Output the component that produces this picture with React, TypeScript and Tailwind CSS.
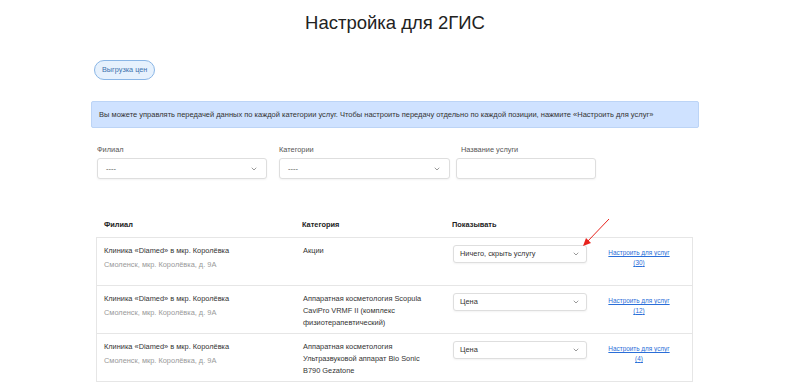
import { ChevronDown } from 'lucide-react';

const rows = [
    { cat: 'Акции', show: 'Ничего, скрыть услугу', count: 30 },
    { cat: 'Аппаратная косметология Scopula CaviPro VRMF II (комплекс физиотерапевтический)', show: 'Цена', count: 12 },
    { cat: 'Аппаратная косметология Ультразвуковой аппарат Bio Sonic B790 Gezatone', show: 'Цена', count: 4 },
];

function Select({ value, className }: { value: string; className: string }) {
    return (
        <div className={`flex items-center justify-between rounded-[3px] border border-[#dedede] bg-white shadow-[0_1px_2px_rgba(0,0,0,0.05)] ${className}`}>
            <span>{value}</span>
            <ChevronDown className="h-[8px] w-[8px] text-[#666]" strokeWidth={2} />
        </div>
    );
}

export default function App() {
    return (
        <div className="relative min-h-[383px] bg-white text-[#333]" style={{ fontFamily: '"Liberation Sans", Arial, sans-serif' }}>
            <div className="ml-[91px] w-[608px] pt-[11px]">
                <h1 className="text-center text-[18.5px] leading-[24px] text-[#222]">Настройка для 2ГИС</h1>

                <button className="ml-[3px] mt-[25px] h-[20px] rounded-full border border-[#8ab6e6] bg-[#e6f1fd] px-[7px] text-[7.3px] text-[#3d72ad]">
                    Выгрузка цен
                </button>

                <div className="mt-[21px] flex h-[27px] items-center rounded-[2px] border border-[#bcd4f6] bg-[#cfe2ff] px-[7px] text-[7.5px] text-[#333]">
                    Вы можете управлять передачей данных по каждой категории услуг. Чтобы настроить передачу отдельно по каждой позиции, нажмите «Настроить для услуг»
                </div>

                <div className="mt-[15px] flex pl-[6px] text-[7.4px] text-[#555]">
                    <div className="w-[182px]">
                        <div className="h-[14px] pt-[1px]">Филиал</div>
                        <Select value="----" className="mt-[1px] h-[21px] w-[170px] px-[8px] text-[#555]" />
                    </div>
                    <div className="w-[177px]">
                        <div className="h-[14px] pt-[1px]">Категории</div>
                        <Select value="----" className="mt-[1px] h-[21px] w-[171px] px-[8px] text-[#555]" />
                    </div>
                    <div className="w-[140px]">
                        <div className="h-[14px] pl-[5px] pt-[1px]">Название услуги</div>
                        <div className="mt-[1px] h-[21px] w-[140px] rounded-[3px] border border-[#dedede] bg-white shadow-[0_1px_2px_rgba(0,0,0,0.05)]" />
                    </div>
                </div>

                <div className="ml-[5px] mt-[39px] w-[597px] text-[7.4px]">
                    <div className="grid h-[20px] grid-cols-[199px_149px_155px_94px] border-b border-[#e6e6e6] font-bold text-[#222]">
                        <div className="pl-[8px] pt-[1px]">Филиал</div>
                        <div className="pl-[7px] pt-[1px]">Категория</div>
                        <div className="pl-[8px] pt-[1px]">Показывать</div>
                        <div />
                    </div>
                    {rows.map((r, i) => (
                        <div key={i} className="grid h-[48px] grid-cols-[199px_149px_155px_94px] border-x border-b border-[#e6e6e6] leading-[12px]">
                            <div className="pl-[7px] pt-[7px]">
                                <div className="text-[#333]">Клиника «Diamed» в мкр. Королёвка</div>
                                <div className="mt-[2px] text-[#999]">Смоленск, мкр. Королёвка, д. 9А</div>
                            </div>
                            <div className="pl-[7px] pr-[10px] pt-[7px] text-[#333]">{r.cat}</div>
                            <div className="pl-[8px] pt-[7px]">
                                <Select value={r.show} className="h-[18px] w-[134px] pl-[6px] pr-[6px] text-[#333]" />
                            </div>
                            <div className="pr-[16px] pt-[10px] text-center text-[6.4px] leading-[10px]">
                                <a href="#" className="text-[#2a6ed8] underline">Настроить для услуг<br />({r.count})</a>
                            </div>
                        </div>
                    ))}
                </div>
            </div>

            <svg className="absolute left-[578px] top-[216px]" width="36" height="34" viewBox="0 0 36 34">
                <line x1="31" y1="3" x2="9" y2="26" stroke="#e8231d" strokeWidth="1" />
                <polygon points="5,30 8,22 13,27" fill="#e8231d" />
            </svg>
        </div>
    );
}
